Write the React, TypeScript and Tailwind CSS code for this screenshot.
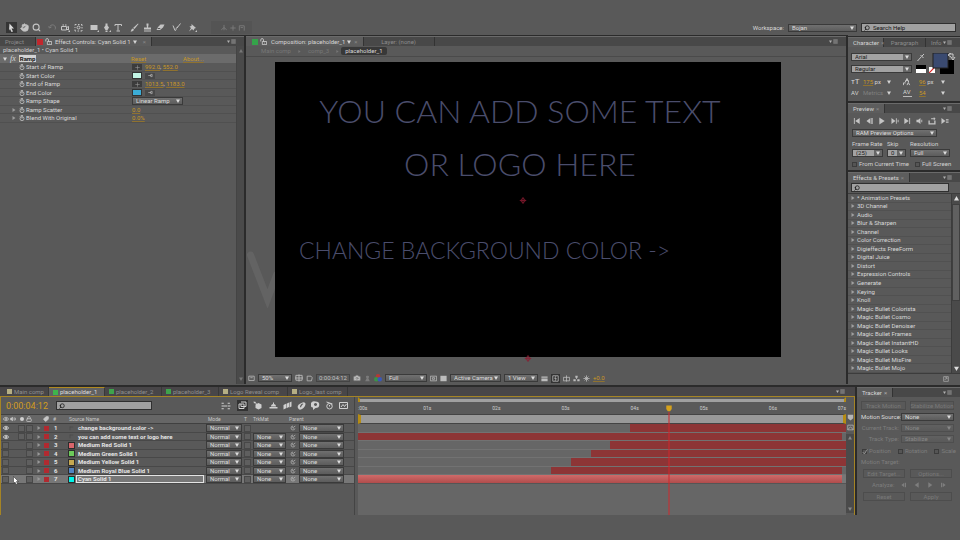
import * as React from 'react';
import {
  Camera,
  Eye,
  Hand,
  Lock,
  Search,
  Tag,
  Volume2,
} from 'lucide-react';
import { clsx } from 'clsx';

/* ---------- Data ---------- */

const EFFECTS = [
  '* Animation Presets',
  '3D Channel',
  'Audio',
  'Blur & Sharpen',
  'Channel',
  'Color Correction',
  'Digieffects FreeForm',
  'Digital Juice',
  'Distort',
  'Expression Controls',
  'Generate',
  'Keying',
  'Knoll',
  'Magic Bullet Colorista',
  'Magic Bullet Cosmo',
  'Magic Bullet Denoiser',
  'Magic Bullet Frames',
  'Magic Bullet InstantHD',
  'Magic Bullet Looks',
  'Magic Bullet MisFire',
  'Magic Bullet Mojo',
];

interface Layer {
  name: string;
  swatch?: string;
  visible?: boolean;
  matte?: boolean;
  selected?: boolean;
  /** Bar start and end, in percent of the track */
  start: number;
  end: number;
}

const LAYERS: Layer[] = [
  { name: 'change background color ->', visible: true, start: 55.7, end: 100 },
  { name: 'you can add some text or logo here', visible: true, matte: true, start: 0, end: 99.2 },
  { name: 'Medium Red Solid 1', swatch: 'bg-[#d9656b]', matte: true, start: 51.6, end: 100 },
  { name: 'Medium Green Solid 1', swatch: 'bg-[#6cc95a]', matte: true, start: 47.7, end: 100 },
  { name: 'Medium Yellow Solid 1', swatch: 'bg-[#c6a850]', matte: true, start: 43.7, end: 100 },
  { name: 'Medium Royal Blue Solid 1', swatch: 'bg-[#5284c4]', matte: true, start: 39.6, end: 99.2 },
  { name: 'Cyan Solid 1', swatch: 'bg-[#00f5ea]', matte: true, selected: true, start: 0, end: 99.2 },
];

const COMP_TABS = [
  { name: 'Main comp', color: 'bg-[#b5ae84]', width: 'w-[46px]' },
  { name: 'placeholder_1', color: 'bg-[#3fb54c]', width: 'w-[56px]', active: true },
  { name: 'placeholder_2', color: 'bg-[#3fa34c]', width: 'w-[57px]' },
  { name: 'placeholder_3', color: 'bg-[#3fa34c]', width: 'w-[57px]' },
  { name: 'Logo Reveal comp', color: 'bg-[#b5ae84]', width: 'w-[69px]' },
  { name: 'Logo_last comp', color: 'bg-[#b5ae84]', width: 'w-[60px]' },
];

const LAYER_COLS =
  'grid grid-cols-[8px_8px_8px_8px_9px_8px_8px_147px_38px_9px_36px_10px_46px] items-center pl-px';

/* ---------- Small parts ---------- */

function Icon({ d, fill, className = 'size-[9px]' }: { d: string; fill?: boolean; className?: string }) {
  return (
    <svg
      viewBox="0 0 18 18"
      className={clsx('shrink-0', className)}
      fill={fill ? 'currentColor' : 'none'}
      stroke={fill ? 'none' : 'currentColor'}
      strokeWidth="2"
    >
      <path d={d} />
    </svg>
  );
}

const Down = ({ className = 'size-[4px]' }: { className?: string }) => (
  <svg viewBox="0 0 8 8" className={clsx('shrink-0', className)} fill="currentColor">
    <path d="M0 1h8L4 8z" />
  </svg>
);

const Twirl = ({ className = 'size-[4px]' }: { className?: string }) => (
  <svg viewBox="0 0 8 8" className={clsx('shrink-0', className)} fill="currentColor">
    <path d="M1 0l6 4-6 4z" />
  </svg>
);

function Stopwatch() {
  return (
    <svg viewBox="0 0 18 18" className="size-[6px] shrink-0" fill="none" stroke="currentColor" strokeWidth="2">
      <circle cx="9" cy="11" r="6" />
      <path d="M9 11V6M6 1h6M9 1v4M2 5l3-2" />
    </svg>
  );
}

/* Padlock with the shackle swung open to the left */
function OpenLock() {
  return (
    <svg viewBox="0 0 18 18" className="size-[7px] shrink-0" fill="none" stroke="currentColor" strokeWidth="2">
      <path d="M2 9V5c0-5 7-5 7 0v4" />
      <path d="M6 9h11v8H6z" />
      <path d="M11 13h2" />
    </svg>
  );
}

function PanelMenu() {
  return (
    <button aria-label="Panel menu" className="flex items-center gap-px text-[#b0b0b0]">
      <Down className="size-[3px]" />
      <Icon d="M1 3h16M1 7h16M1 11h16M1 15h16" className="size-[5px]" />
    </button>
  );
}

interface DropdownProps {
  label: string;
  value: string;
  className?: string;
  light?: boolean;
  disabled?: boolean;
}

function Dropdown({ label, value, className, light, disabled }: DropdownProps) {
  return (
    <span
      className={clsx(
        'relative flex h-[8px] items-center border border-[#3a3a3a]',
        light ? 'bg-[#a3a3a3] text-[#1c1c1c]' : 'bg-linear-to-b from-[#707070] to-[#5c5c5c] text-[#dcdcdc]',
        disabled && 'opacity-35',
        className,
      )}
    >
      <select
        aria-label={label}
        disabled={disabled}
        className="h-full w-full appearance-none bg-transparent pl-[3px] leading-[6px] opacity-100"
      >
        <option>{value}</option>
      </select>
      <span
        className={clsx(
          'pointer-events-none absolute inset-y-0 right-0 flex w-[8px] items-center justify-center text-[#dedede]',
          light && 'bg-[#666]',
        )}
      >
        <Down />
      </span>
    </span>
  );
}

function SearchBox({ label, className, value }: { label: string; className?: string; value?: string }) {
  return (
    <label className={clsx('flex h-[9px] items-center gap-[3px] border border-[#303030] bg-[#a1a1a1] px-[2px] text-[#161616]', className)}>
      <Search className="size-[6px] shrink-0 -scale-x-100" strokeWidth={3} />
      <input aria-label={label} defaultValue={value} className="h-full min-w-0 flex-1 outline-none" />
    </label>
  );
}

function Tab({ children, active, className }: { children: React.ReactNode; active?: boolean; className?: string }) {
  return (
    <button
      className={clsx(
        'flex h-full items-center gap-[2px] border-r border-[#333] px-[5px] whitespace-nowrap',
        active ? 'bg-[#5d5d5d] text-[#d6d6d6]' : 'text-[#8c8c8c]',
        className,
      )}
    >
      {children}
    </button>
  );
}

function TabStrip({ children }: { children: React.ReactNode }) {
  return (
    <div className="flex h-[10px] shrink-0 items-center justify-between border-t border-[#6a6a6a] bg-[#484848] pr-[8px]">
      <div className="flex h-full">{children}</div>
      <PanelMenu />
    </div>
  );
}

/* ---------- Toolbar ---------- */

function Toolbar() {
  return (
    <header className="flex h-[15px] shrink-0 items-center justify-between pr-[4px]">
      <div className="flex items-center text-[#c4c4c4]">
        <div className="flex items-center gap-[3px] pl-[6px]">
          <button aria-label="Selection" className="flex size-[11px] items-center justify-center bg-[#353535] text-[#d8d8d8]">
            <Icon fill d="M5 1l9 10H9l3 6-3 1-3-6-2 3z" />
          </button>
          <button aria-label="Hand"><Hand className="size-[9px]" fill="currentColor" /></button>
          <button aria-label="Zoom"><Search className="size-[9px]" strokeWidth={3} /></button>
        </div>
        <div className="flex items-center gap-[4px] pl-[7px]">
          <button aria-label="Rotate" className="text-[#7c7c7c]"><Icon d="M3 9a6 6 0 1 1 11 4M1 7l2 3 4-2" /></button>
          <button aria-label="Camera"><Icon d="M1 7h10v7H1zM11 9l4-2v7l-4-2M3 4h3M8 4h3M14 18h3v-3" /></button>
          <button aria-label="Pan behind">
            <Icon d="M2 5V3h3M8 3h3M14 3h2v3M16 8v3M16 14v2h-3M10 16H7M4 16H2v-3M2 10V8M9 6a3 3 0 1 1 0 6 3 3 0 0 1 0-6z" />
          </button>
        </div>
        <div className="flex items-center gap-[3px] pl-[7px]">
          <button aria-label="Rectangle"><Icon fill d="M1 4h14v10H1zM14 18l4-4v4z" /></button>
          <button aria-label="Pen"><Icon fill d="M7 1h4v4l3 4-3 5H7L4 9l3-4zM7 15h4v3H7zM14 18l4-4v4z" /></button>
          <button aria-label="Type"><Icon d="M2 6V3h13v3M8 3v12M5 16h7" /></button>
        </div>
        <div className="flex items-center gap-[4px] pl-[7px]">
          <button aria-label="Brush"><Icon fill d="M16 1l1 1-8 10-3-2zM5 11l3 2c-1 3-3 4-7 4 2-2 1-4 4-6z" /></button>
          <button aria-label="Clone stamp"><Icon fill d="M7 1h4v3l-1 5h6v4H2V9h6L7 4zM2 15h14v2H2z" /></button>
          <button aria-label="Eraser"><Icon fill d="M9 3h8l-3 6-6 5H1l3-6zM3 12h5l1-2H4z" /></button>
        </div>
        <div className="flex items-center gap-[7px] pl-[7px]">
          <button aria-label="Roto brush"><Icon d="M2 5l4 10c4 0 0-6 6-7M17 1l-7 9" /></button>
          <button aria-label="Puppet pin"><Icon fill d="M7 2l9 8-3 1-2 4-3-3-6 5 4-7-3-3 4-1zM14 18l4-4v4z" /></button>
        </div>
        <div className="ml-[14px] flex h-[13px] items-center gap-px bg-[#545454] pr-[6px] pl-[9px] text-[#7c7c7c]">
          <Icon d="M9 2v12M3 13l6-5 6 5" className="size-[8px]" />
          <Icon d="M9 3v12M3 9h12" className="size-[8px]" />
          <Icon d="M3 15V4h11v11M6 8h5" className="size-[8px]" />
        </div>
      </div>
      <div className="flex items-center gap-[4px]">
        <span className="text-[#d8d8d8]">Workspace:</span>
        <Dropdown label="Workspace" value="Bojan" className="w-[69px]" />
        <SearchBox label="Search Help" value="Search Help" className="w-[95px]" />
      </div>
    </header>
  );
}

/* ---------- Effect controls ---------- */

const Amber = ({ children }: { children: React.ReactNode }) => (
  <span className="text-[#c99826] underline decoration-[#8f7230] underline-offset-1">{children}</span>
);

const Point = ({ x, y }: { x: string; y: string }) => (
  <>
    <button aria-label="Pick point" className="flex h-[6px] w-[10px] items-center justify-center bg-[#3c3c3c] text-[#9a9a9a]">
      <Icon d="M9 1v16M1 9h16" className="size-[5px]" />
    </button>
    <span><Amber>{x}</Amber>, <Amber>{y}</Amber></span>
  </>
);

const Swatch = ({ color }: { color: string }) => (
  <>
    <button aria-label="Color" className={clsx('h-[7px] w-[10px] border border-[#333]', color)} />
    <button aria-label="Eyedropper" className="flex h-[6px] w-[10px] items-center justify-center bg-[#484848] text-[#cfcfcf]">
      <Icon d="M1 9h10M10 5v8h5V5z" className="size-[5px]" />
    </button>
  </>
);

const RAMP_ROWS: { label: string; twirl?: boolean; control: React.ReactNode }[] = [
  { label: 'Start of Ramp', control: <Point x="992.0" y="552.0" /> },
  { label: 'Start Color', control: <Swatch color="bg-[#c3f6e6]" /> },
  { label: 'End of Ramp', control: <Point x="1013.5" y="1183.0" /> },
  { label: 'End Color', control: <Swatch color="bg-[#3bacd6]" /> },
  { label: 'Ramp Shape', control: <Dropdown label="Ramp Shape" value="Linear Ramp" className="w-[51px]" /> },
  { label: 'Ramp Scatter', twirl: true, control: <Amber>0.0</Amber> },
  { label: 'Blend With Original', twirl: true, control: <Amber>0.0%</Amber> },
];

function EffectControls() {
  return (
    <section className="flex w-[244px] shrink-0 flex-col border-t border-[#2b2b2b]">
      <TabStrip>
        <Tab className="w-[36px]">Project</Tab>
        <Tab active className="pl-px">
          <span className="size-[6px] bg-[#c1272d]" />
          <OpenLock />
          <span className="pl-px">Effect Controls: Cyan Solid 1</span>
          <Down />
          <span className="pl-[4px] text-[#888]">×</span>
        </Tab>
      </TabStrip>
      <div className="flex min-h-0 flex-1">
        <div className="min-w-0 flex-1">
          <p className="h-[8px] pl-[3px] leading-[8px] text-[#d0d0d0]">placeholder_1 • Cyan Solid 1</p>
          <div className="grid h-[9px] grid-cols-[131px_52px_1fr] items-center bg-[#6b6b6b]">
            <div className="flex items-center gap-[3px] pl-[3px] text-[#d8d8d8]">
              <Down />
              <i className="font-['Liberation_Serif',serif] text-[8px]">fx</i>
              <strong className="bg-[#d2d2d2] px-px leading-[7px] text-[#161616]">Ramp</strong>
            </div>
            <Amber>Reset</Amber>
            <Amber>About...</Amber>
          </div>
          <div className="grid h-[60px] grid-rows-7">
            {RAMP_ROWS.map((row) => (
              <div key={row.label} className="grid grid-cols-[132px_1fr] items-center border-b border-[#505050]">
                <div className="flex items-center pl-[12px] text-[#d8d8d8]">
                  <span className="w-[7px] text-[#9d9d9d]">{row.twirl && <Twirl />}</span>
                  <Stopwatch />
                  <span className="pl-px">{row.label}</span>
                </div>
                <div className="flex items-center gap-[3px]">{row.control}</div>
              </div>
            ))}
          </div>
        </div>
        <div className="flex w-[8px] flex-col items-center justify-between border-l border-[#444] bg-[#4a4a4a] py-[3px] text-[#777]">
          <Down className="size-[4px] rotate-180" />
          <Down />
        </div>
      </div>
    </section>
  );
}

/* ---------- Composition viewer ---------- */

function Composition() {
  return (
    <section className="relative flex min-w-0 flex-1 flex-col border-x-2 border-t border-[#2b2b2b]">
      <TabStrip>
        <Tab active className="pl-[6px]">
          <span className="size-[6px] bg-[#35a34a]" />
          <OpenLock />
          <span className="pl-[2px]">Composition: placeholder_1</span>
          <Down />
          <span className="pl-px text-[#888]">×</span>
        </Tab>
        <Tab className="w-[71px] justify-center">Layer: (none)</Tab>
      </TabStrip>
      <nav className="flex h-[11px] items-center gap-[7px] border-b border-[#4a4a4a] pl-[15px] text-[#777]">
        <a href="#main">Main comp</a>
        <Twirl className="size-[3px]" />
        <a href="#comp3">comp_3</a>
        <Twirl className="size-[3px]" />
        <a href="#placeholder" className="-ml-[5px] rounded-xs bg-[#383838] px-[4px] text-[#d8d8d8]">placeholder_1</a>
      </nav>

      {/* Frame */}
      <div className="relative mt-[5px] mr-[65px] ml-[29px] h-[295px] shrink-0 bg-black font-['Lato',sans-serif] font-light whitespace-nowrap text-[#4a4d6c]">
        <p className="pt-[28px] pr-[16px] text-center text-[32px] leading-[42px]">YOU CAN ADD SOME TEXT</p>
        <p className="pt-[11px] pr-[16px] text-center text-[32px] leading-[42px]">OR LOGO HERE</p>
        <p className="pt-[49px] pl-[24px] text-[23px] leading-[32px]">CHANGE BACKGROUND COLOR -&gt;</p>
        <Crosshair className="top-[135px] left-[49%]" />
        <Crosshair className="-bottom-[5px] left-1/2" />
      </div>
      <svg viewBox="0 0 28 60" className="absolute top-[212px] left-0 h-[60px] w-[29px]" fill="none" stroke="#636363" strokeWidth="7" strokeLinecap="round">
        <path d="M4 7l17 44 9-24" />
      </svg>

      {/* Viewer controls */}
      <div className="mt-auto flex h-[11px] items-center gap-[3px] pb-px pl-[2px] text-[#bdbdbd]">
        <Icon d="M2 3h14v11H2zM6 7h6" className="size-[7px]" />
        <Dropdown label="Magnification" value="50%" className="w-[34px]" />
        <Icon d="M2 3h14v11H2zM9 1v16M0 9h18" className="size-[8px]" />
        <Icon d="M3 3h10l3 4-2 8H3z" className="size-[7px]" />
        <span className="border border-[#444] px-[2px] leading-[6px] text-[#c2c2c2]">0:00:04:12</span>
        <Camera className="size-[8px]" fill="#bdbdbd" stroke="#777" />
        <Icon fill d="M9 2a3 3 0 0 1 2 6l4 8H3l4-8a3 3 0 0 1 2-6z" className="size-[7px] text-[#7b7b7b]" />
        <svg viewBox="0 0 18 18" className="size-[8px]">
          <circle cx="9" cy="5" r="5" fill="#b33a36" />
          <circle cx="5" cy="12" r="5" fill="#3b9348" />
          <circle cx="13" cy="12" r="5" fill="#3a58b8" />
        </svg>
        <Dropdown label="Resolution" value="Full" className="w-[42px]" />
        <Icon d="M1 3h16v12H1zM6 7h6v4H6z" className="size-[7px]" />
        <Icon fill d="M1 2h16v14H1z" className="size-[7px]" />
        <Dropdown label="View" value="Active Camera" className="w-[51px]" />
        <Dropdown label="View layout" value="1 View" className="w-[34px]" />
        <Icon fill d="M1 4h16v3H1zM1 9h16v7H1z" className="size-[7px]" />
        <span className="bg-[#333] p-px"><Icon d="M2 2h14v14H2zM10 3l-3 6h4l-3 6" className="size-[7px]" /></span>
        <Icon d="M1 6h16v9H1zM9 1v16" className="size-[7px]" />
        <Icon fill d="M6 2h6v5H6zM1 11h6v5H1zM11 11h6v5h-6zM8 7h2v3H8z" className="size-[7px]" />
        <Icon d="M9 1v16M1 9h16M4 4l10 10M14 4L4 14" className="size-[7px]" />
        <Amber>+0.0</Amber>
      </div>
    </section>
  );
}

function Crosshair({ className }: { className?: string }) {
  return (
    <svg viewBox="0 0 14 14" className={clsx('absolute size-[7px] -translate-x-1/2', className)} fill="none" stroke="#8c1c32" strokeWidth="1.5">
      <circle cx="7" cy="7" r="4" />
      <path d="M7 0v14M0 7h14" />
    </svg>
  );
}

/* ---------- Right column ---------- */

function CharacterPanel() {
  return (
    <section className="mt-px h-[65px] border-t border-[#2b2b2b]">
      <TabStrip>
        <Tab active className="w-[36px]">Character <span className="text-[#888]">×</span></Tab>
        <Tab className="w-[42px] justify-center">Paragraph</Tab>
        <Tab className="w-[16px] border-r-0">Info</Tab>
      </TabStrip>
      <div className="flex gap-[4px] pt-[6px] pl-[3px]">
        <div className="flex flex-col gap-[4px]">
          <Dropdown light label="Font" value="Arial" className="w-[61px]" />
          <Dropdown light label="Font style" value="Regular" className="w-[61px]" />
        </div>
        <div className="flex flex-col gap-[3px]">
          <Icon d="M3 16l8-9M9 4l6 6M12 6l4-4" className="size-[9px] text-[#c8c8c8]" />
          <div className="flex items-end gap-[3px]">
            <span className="h-[8px] w-[10px] border-b-4 border-white bg-black" />
            <svg viewBox="0 0 10 10" className="size-[6px] bg-white"><path d="M0 10L10 0" stroke="#d22" strokeWidth="2" /></svg>
          </div>
        </div>
        <svg viewBox="0 0 24 22" className="-ml-[7px] h-[22px] w-[24px]">
          <rect x="8" y="7" width="14" height="14" fill="#000" />
          <rect x="1" y="0" width="15" height="15" fill="#3a4a70" stroke="#222" />
          <path d="M17 1h4v4M19 0l-3 2 3 2M19 4l2 3 2-3" stroke="#ccc" fill="none" />
        </svg>
      </div>
      <div className="grid grid-cols-[12px_24px_16px_16px_22px_1fr] items-center gap-y-[2px] pt-[3px] pl-[3px] text-[#d4d4d4]">
        <span className="text-[8px]">тT</span>
        <span><Amber>175</Amber> px</span>
        <Down />
        <Icon d="M5 9l4-8 4 8M6 6h6M1 16V11h5M9 16l3-6 3 6" className="size-[8px]" />
        <span><Amber>96</Amber> px</span>
        <Down />
        <span>AV</span>
        <span className="text-[#808080]">Metrics</span>
        <Down />
        <span className="w-[9px] border-b border-[#bbb]">AV</span>
        <Amber>54</Amber>
        <Down />
      </div>
    </section>
  );
}

const TRANSPORT = [
  'M2 2h2v14H2zM15 2v14L5 9z',
  'M10 2v14L1 9zM12 2h3v14h-3z',
  'M3 1v16l12-8z',
  'M1 2v14l9-7zM11 3h2v12h-2zM15 6h2v6h-2z',
  'M3 2v14l10-7zM14 2h2v14h-2z',
  'M1 6h4l5-4v14l-5-4H1zM12 6h2v6h-2z',
  'M1 8h3v6h10V8h3v9H1zM7 3h6V0l4 4-4 4V5H7z',
  'M1 2v14l9-7zM11 5h6v2h-6zM11 8h6v2h-6zM11 11h6v2h-6z',
];

function PreviewPanel() {
  return (
    <section className="h-[69px] border-t-2 border-[#2b2b2b]">
      <TabStrip>
        <Tab active>Preview <span className="text-[#888]">×</span></Tab>
      </TabStrip>
      <div className="flex flex-col gap-[3px] px-[4px] pt-[4px] text-[#d2d2d2]">
        <div className="flex justify-between pr-[7px] pl-px text-[#c4c4c4]">
          {TRANSPORT.map((d) => (
            <button key={d} aria-label="Transport"><Icon fill d={d} className="size-[8px]" /></button>
          ))}
        </div>
        <Dropdown label="Preview options" value="RAM Preview Options" className="mt-px w-[85px]" />
        <div className="grid grid-cols-[35px_23px_40px] gap-y-px">
          <span>Frame Rate</span>
          <span>Skip</span>
          <span>Resolution</span>
          <Dropdown light label="Frame Rate" value="(25)" className="mr-[4px]" />
          <Dropdown light label="Skip" value="0" className="mr-[4px]" />
          <Dropdown label="Resolution" value="Full" />
        </div>
        <div className="flex gap-[6px]">
          <Check label="From Current Time" />
          <Check label="Full Screen" />
        </div>
      </div>
    </section>
  );
}

function Check({ label, checked }: { label: string; checked?: boolean }) {
  return (
    <label className="flex items-center gap-[2px] whitespace-nowrap">
      <span className="relative flex size-[5px]">
        <input type="checkbox" defaultChecked={checked} className="size-[5px] appearance-none border border-[#3c3c3c] bg-[#555]" />
        {checked && <Icon d="M2 9l5 6L16 1" className="absolute inset-0 size-[6px] text-[#b0b0b0]" />}
      </span>
      {label}
    </label>
  );
}

function EffectsPanel() {
  return (
    <section className="flex flex-1 flex-col border-t-2 border-[#2b2b2b]">
      <TabStrip>
        <Tab active>Effects &amp; Presets <span className="text-[#888]">×</span></Tab>
      </TabStrip>
      <SearchBox label="Search effects" className="mt-px mr-[11px] ml-[3px]" />
      <div className="mt-px flex h-[181px] border-y border-[#3c3c3c]">
        <ul className="grid min-w-0 flex-1 auto-rows-fr text-[#d8d8d8]">
          {EFFECTS.map((name) => (
            <li key={name} className="flex items-center gap-[2px] border-b border-[#515151] pl-[3px]">
              <Twirl className="size-[4px] text-[#a0a0a0]" />
              {name}
            </li>
          ))}
        </ul>
        <div className="flex w-[9px] flex-col items-center gap-[3px] border-l border-[#3c3c3c] bg-[#4a4a4a] py-[2px] text-[#ddd]">
          <Down className="size-[5px] rotate-180" />
          <span className="h-[97px] w-full border border-[#3f3f3f] bg-[#606060]" />
          <Down className="mt-auto size-[5px]" />
        </div>
      </div>
      <div className="flex flex-1 items-center justify-end pr-[11px] text-[#b5b5b5]">
        <Icon d="M2 2h14v14M16 16H2V2M5 12l6-6M7 5h5v5" className="size-[6px]" />
      </div>
    </section>
  );
}

/* ---------- Timeline ---------- */

const Box = () => <span className="block size-[7px] border border-[#484848] bg-[#5f5f5f]" />;

function LayerTable() {
  return (
    <table className="block">
      <thead className="block">
        <tr className={clsx(LAYER_COLS, 'h-[10px] border-y border-[#404040] bg-[#666] text-left text-[5px] text-[#c6c6c6]')}>
          <th aria-label="Video"><Eye className="ml-px size-[6px]" strokeWidth={3} /></th>
          <th aria-label="Audio"><Volume2 className="size-[6px]" fill="currentColor" /></th>
          <th aria-label="Solo"><span className="ml-[2px] block size-[4px] rounded-full bg-[#d0d0d0]" /></th>
          <th aria-label="Lock"><Lock className="size-[6px]" strokeWidth={3} /></th>
          <th />
          <th aria-label="Label"><Tag className="size-[6px] -scale-x-100" fill="currentColor" /></th>
          <th className="pl-[2px] font-normal">#</th>
          <th className="pl-[10px] font-normal">Source Name</th>
          <th className="pl-[2px] font-normal">Mode</th>
          <th className="font-normal">T</th>
          <th className="font-normal">TrkMat</th>
          <th className="col-span-2 font-normal">Parent</th>
        </tr>
      </thead>
      <tbody className="grid h-[60px] grid-rows-7">
        {LAYERS.map((layer, i) => (
          <tr key={layer.name} className={clsx(LAYER_COLS, 'border-b border-[#484848] text-[#e4e4e4]', layer.selected && 'bg-[#777]')}>
            <td>{layer.visible ? <Eye className="ml-px size-[6px]" strokeWidth={3} /> : <Box />}</td>
            <td />
            <td>{layer.visible && <Box />}</td>
            <td><Box /></td>
            <td><Twirl className="ml-[3px] size-[4px] text-[#999]" /></td>
            <td><span className="ml-px block size-[5px] bg-[#b02a30]" /></td>
            <td className="pl-[3px] font-bold">{i + 1}</td>
            <td className="flex items-center pl-[9px] font-bold whitespace-nowrap">
              <span
                className={clsx(
                  'size-[7px] shrink-0',
                  layer.swatch ? [layer.swatch, 'border border-[#2c2c2c]'] : 'scale-50 border-t border-l border-[#444]',
                )}
              />
              <span className={clsx('ml-px flex-1 border pl-px leading-[6px]', layer.selected ? 'mr-[2px] border-[#e4e4e4]' : 'border-transparent')}>
                {layer.name}
              </span>
            </td>
            <td><Dropdown label="Mode" value="Normal" className="mr-[2px]" /></td>
            <td><Box /></td>
            <td>{layer.matte && <Dropdown label="Track matte" value="None" className="mr-[3px]" />}</td>
            <td>
              <Icon d="M9 3a6 6 0 1 0 6 7M6 8c3-3 6 0 4 3M11 6l5-3" className="ml-px size-[6px] text-[#c0c0c0]" />
            </td>
            <td><Dropdown label="Parent" value="None" className="mr-px" /></td>
          </tr>
        ))}
      </tbody>
    </table>
  );
}

/* Composition switches above the layer list */
const HEAD_ICONS: { d: string; fill?: boolean }[] = [
  { d: 'M1 12h16v3H1zM4 11a5 5 0 0 1 10 0zM8 3h2v3H8z', fill: true },
  { d: 'M1 8l6-3v9l-6 3zM8 5l4-2v9l-4 2zM13 3l4-2v10l-4 2z', fill: true },
  { d: 'M2 14c-2-4 2-8 5-9l2-1c4-3 8-1 8 2s-3 8-7 10-6 2-8-2zM6 12l2 1c0-3 3-6 5-7l-2-1c-3 1-5 4-5 7z', fill: true },
  { d: 'M9 1a7 6 0 1 1 0 13L4 18v-5A7 6 0 0 1 9 1zM9 4a3 3 0 1 0 .1 0z', fill: true },
  { d: 'M9 5a5 5 0 1 1 0 11A5 5 0 0 1 9 5zM3 2l12 4M9 8v3' },
  { d: 'M1 3h16v12H1zM4 12l4-5 3 4 4-5' },
];

function Timeline() {
  return (
    <section className="flex min-w-0 flex-1 flex-col">
      <div className="flex h-[11px] items-center justify-between border-t-2 border-[#2b2b2b] bg-[#484648] pr-[10px]">
        <div className="flex h-full pl-[3px]">
          {COMP_TABS.map((tab) => (
            <button
              key={tab.name}
              className={clsx(
                'flex h-full items-center gap-[2px] border-r border-[#383838] pl-[4px] whitespace-nowrap',
                tab.width,
                tab.active ? 'border-t border-t-[#b08a20] bg-[#616161] text-[#dedede]' : 'text-[#8f8f8f]',
              )}
            >
              <span className={clsx('size-[5px]', tab.color)} />
              {tab.name}
            </button>
          ))}
        </div>
        <PanelMenu />
      </div>

      <div className="flex flex-1 border border-b-0 border-[#a58425]">
        {/* Layers */}
        <div className="w-[354px] shrink-0 border-r border-[#444]">
          <div className="flex h-[17px] items-center pl-[5px] text-[#d0d0d0]">
            <span className="w-[50px] text-[9px] text-[#d39d20]">0:00:04:12</span>
            <SearchBox label="Search layers" className="w-[96px]" />
            <div className="ml-auto flex items-center gap-[5px] pr-[6px]">
              <Icon d="M1 4h4M1 9h5M1 14h4M6 9h5M12 4h4M12 9h5M12 14h4" className="mr-px size-[10px]" />
              <span className="bg-[#333] p-px"><Icon d="M2 6h10v9H2zM6 2h10v9h-4M6 6v5h6" className="size-[9px]" /></span>
              <Icon fill d="M5 7l6-3 6 3v7l-6 3-6-3zM1 1l5 1-1 1 3 3-1 1-3-3-2 1z" className="mr-[2px] size-[9px]" />
              {HEAD_ICONS.map((icon) => (
                <Icon key={icon.d} d={icon.d} fill={icon.fill} className="size-[9px]" />
              ))}
            </div>
          </div>
          <LayerTable />
        </div>

        {/* Tracks */}
        <div className="relative min-w-0 flex-1 pl-[3px]">
          <div className="flex h-full flex-col bg-[#666]">
            <div className="h-[5px] border-x-2 border-t-2 border-x-[#b58c14] border-t-[#595959] bg-[#a0a0a0]" />
            <div className="relative h-[12px] bg-[#5a5a5a] pr-[4px] text-[5px] text-[#cfcfcf]">
              <div className="grid h-full w-full grid-cols-7 items-center">
                {['00s', '01s', '02s', '03s', '04s', '05s', '06s'].map((t, i) => (
                  <span key={t} className={clsx(i > 0 && '-ml-[4px]')}>{i === 0 ? `:${t}` : t}</span>
                ))}
              </div>
              <span className="absolute top-[2px] right-0">07s</span>
            </div>
            <div className="h-[10px] border-y border-x-3 border-y-[#444] border-x-[#b58c14] bg-[#999]" />
            <div className="grid h-[60px] shrink-0 grid-rows-7">
              {LAYERS.map((layer) => (
                <div key={layer.name} className={clsx('flex border-b', layer.selected ? 'border-[#555] bg-[#777]' : 'border-[#727272]')}>
                  <div
                    className={clsx('h-full', layer.selected ? 'bg-linear-to-b from-[#cf6a69] to-[#b04c4c]' : 'bg-[#8d3536]')}
                    style={{ marginLeft: `${layer.start}%`, width: `${layer.end - layer.start}%` }}
                  />
                </div>
              ))}
            </div>
          </div>
          {/* Playhead */}
          <div className="absolute top-[8px] bottom-0 left-[64%] flex w-[7px] -translate-x-1/2 flex-col items-center">
            <Icon fill d="M2 1h14v9l-4 6H6l-4-6z" className="size-[7px] text-[#d6a21c]" />
            <span className="w-px flex-1 bg-[#d0282c]" />
          </div>
        </div>

        <div className="flex w-[8px] shrink-0 flex-col items-center gap-[3px] pt-[17px] pb-[2px] text-[#b5b5b5]">
          <Icon fill d="M2 2h14v9l-7 6-7-6z" className="size-[7px]" />
          <Icon d="M2 3h14v12H2zM2 15L9 7l7 8" className="size-[7px]" />
          <div className="flex w-full flex-1 flex-col items-center justify-between bg-[#4a4a4a] py-[2px] text-[#888]">
            <Down className="size-[4px] rotate-180" />
            <Down />
          </div>
        </div>
      </div>
    </section>
  );
}

/* ---------- Tracker ---------- */

const DimButton = ({ children }: { children: React.ReactNode }) => (
  <button disabled className="h-[9px] border border-[#4d4d4d] leading-[7px] whitespace-nowrap text-[#7a7a7a]">
    {children}
  </button>
);

function Tracker() {
  return (
    <section className="w-[105px] shrink-0 border-t-2 border-l-2 border-[#2b2b2b]">
      <TabStrip>
        <Tab active>Tracker <span className="text-[#aaa]">×</span></Tab>
      </TabStrip>
      <div className="flex flex-col gap-[3px] pt-[4px] pr-[6px] pl-[4px] text-[#7e7e7e]">
        <div className="grid grid-cols-2 gap-[4px]">
          <DimButton>Track Motion</DimButton>
          <DimButton>Stabilize Motion</DimButton>
        </div>
        <div className="grid grid-cols-[38px_1fr] items-center gap-x-[2px] gap-y-[3px] text-right">
          <span className="whitespace-nowrap text-[#dadada]">Motion Source:</span>
          <Dropdown label="Motion Source" value="None" />
          <span className="whitespace-nowrap">Current Track:</span>
          <Dropdown disabled label="Current Track" value="None" />
          <span>Track Type:</span>
          <Dropdown disabled label="Track Type" value="Stabilize" />
        </div>
        <div className="flex gap-[7px] pt-px pl-px">
          <Check label="Position" checked />
          <Check label="Rotation" />
          <Check label="Scale" />
        </div>
        <span>Motion Target:</span>
        <div className="grid grid-cols-2 gap-[5px] px-[2px]">
          <DimButton>Edit Target...</DimButton>
          <DimButton>Options...</DimButton>
        </div>
        <div className="flex items-center gap-[7px] pl-[11px]">
          Analyze:
          {['M10 2v14L1 9zM12 2h3v14h-3z', 'M14 1v16L2 9z', 'M4 1v16l12-8z', 'M3 2h3v14H3zM8 2v14l9-7z'].map((d) => (
            <Icon key={d} fill d={d} className="size-[6px]" />
          ))}
        </div>
        <div className="grid grid-cols-2 gap-[5px] px-[2px]">
          <DimButton>Reset</DimButton>
          <DimButton>Apply</DimButton>
        </div>
      </div>
    </section>
  );
}

export default function App() {
  return (
    <div className="relative flex min-h-screen flex-col overflow-hidden bg-[#595959] pt-[20px] pb-[25px] font-['Roboto',sans-serif] text-[6px] leading-[8px] text-[#d0d0d0]">
      <Toolbar />
      <main className="flex h-[349px] shrink-0">
        <EffectControls />
        <Composition />
        <aside className="flex w-[112px] shrink-0 flex-col">
          <CharacterPanel />
          <PreviewPanel />
          <EffectsPanel />
        </aside>
      </main>
      <div className="flex flex-1 pt-px">
        <Timeline />
        <Tracker />
      </div>
      {/* Mouse pointer */}
      <svg viewBox="0 0 12 18" className="absolute top-[476px] left-[13px] h-[9px] w-[6px]">
        <path d="M1 1v14l3-3 2 5 3-1-2-5h4z" fill="#fff" stroke="#222" />
      </svg>
    </div>
  );
}
